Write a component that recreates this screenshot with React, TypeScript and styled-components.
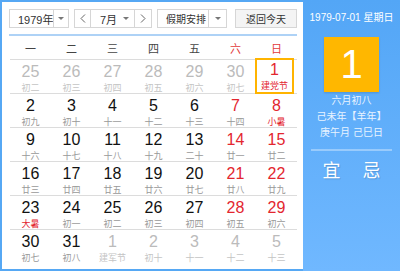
import React from "react";
import styled, { createGlobalStyle } from "styled-components";

const GlobalStyle = createGlobalStyle`
  html, body {
    margin: 0;
    padding: 0;
    background: #fff;
  }
  body {
    font-family: "Liberation Sans", "Noto Sans CJK SC", sans-serif;
  }
`;

type Kind = "other" | "normal" | "weekend";
interface Day {
  d: number;
  lunar: string;
  kind: Kind;
  fest?: boolean;
  selected?: boolean;
}

const weekdays = ["一", "二", "三", "四", "五", "六", "日"];

const o = (d: number, lunar: string): Day => ({ d, lunar, kind: "other" });
const n = (d: number, lunar: string, fest = false): Day => ({ d, lunar, kind: "normal", fest });
const w = (d: number, lunar: string, fest = false): Day => ({ d, lunar, kind: "weekend", fest });

const weeks: Day[][] = [
  [o(25, "初二"), o(26, "初三"), o(27, "初四"), o(28, "初五"), o(29, "初六"), o(30, "初七"),
    { d: 1, lunar: "建党节", kind: "weekend", fest: true, selected: true }],
  [n(2, "初九"), n(3, "初十"), n(4, "十一"), n(5, "十二"), n(6, "十三"), w(7, "十四"), w(8, "小暑", true)],
  [n(9, "十六"), n(10, "十七"), n(11, "十八"), n(12, "十九"), n(13, "二十"), w(14, "廿一"), w(15, "廿二")],
  [n(16, "廿三"), n(17, "廿四"), n(18, "廿五"), n(19, "廿六"), n(20, "廿七"), w(21, "廿八"), w(22, "廿九")],
  [n(23, "大暑", true), n(24, "初一"), n(25, "初二"), n(26, "初三"), n(27, "初四"), w(28, "初五"), w(29, "初六")],
  [n(30, "初七"), n(31, "初八"), o(1, "建军节"), o(2, "初十"), o(3, "十一"), o(4, "十二"), o(5, "十三")],
];

const Widget = styled.div`
  display: flex;
  width: 400px;
  height: 271px;
`;

const LeftPanel = styled.div`
  box-sizing: border-box;
  width: 303px;
  border: 2px solid #56a8f4;
  border-right: none;
  padding: 7px 6px 0 8px;
  background: #fff;
`;

const Toolbar = styled.div`
  display: flex;
  align-items: center;
  height: 19px;
  margin-left: -1px;
`;

const Box = styled.div<{ $w: number; $ml?: number; $grey?: boolean; $fs?: number }>`
  box-sizing: border-box;
  display: flex;
  align-items: stretch;
  width: ${(p) => p.$w}px;
  height: 19px;
  margin-left: ${(p) => p.$ml ?? 0}px;
  border: 1px solid #d6d6d6;
  background: ${(p) => (p.$grey ? "#f4f4f4" : "#fff")};
  font-size: ${(p) => p.$fs ?? 11}px;
  color: #333;
`;

const BoxText = styled.div<{ $center?: boolean; $pl?: number }>`
  flex: 1;
  display: flex;
  align-items: center;
  justify-content: ${(p) => (p.$center ? "center" : "flex-start")};
  padding-left: ${(p) => (p.$center ? 0 : p.$pl ?? 8)}px;
  white-space: nowrap;
`;

const ArrowCell = styled.div<{ $w: number; $line?: boolean }>`
  width: ${(p) => p.$w}px;
  display: flex;
  align-items: center;
  justify-content: center;
  border-left: ${(p) => (p.$line ? "1px solid #d6d6d6" : "none")};
`;

const Caret = styled.span`
  width: 0;
  height: 0;
  border-left: 3px solid transparent;
  border-right: 3px solid transparent;
  border-top: 3px solid #777;
`;

const NavBtn = styled.div<{ $w: number; $side: "l" | "r" }>`
  width: ${(p) => p.$w}px;
  display: flex;
  align-items: center;
  justify-content: center;
  ${(p) => (p.$side === "l" ? "border-right" : "border-left")}: 1px solid #d6d6d6;
`;

const Chevron = ({ dir }: { dir: "l" | "r" }) => (
  <svg width="6" height="9" viewBox="0 0 6 9">
    <polyline
      points={dir === "l" ? "5,0.5 1,4.5 5,8.5" : "1,0.5 5,4.5 1,8.5"}
      fill="none"
      stroke="#666"
      strokeWidth="1"
    />
  </svg>
);

const BlueRule = styled.div`
  height: 2px;
  margin: 6px 0 0 -1px;
  background: #aed2f6;
`;

const Grid = styled.div`
  display: grid;
  grid-template-columns: repeat(7, 41px);
`;

const Head = styled.div<{ $red?: boolean }>`
  height: 23px;
  display: flex;
  align-items: center;
  justify-content: center;
  font-size: 11px;
  color: ${(p) => (p.$red ? "#e23a3a" : "#444")};
  border-bottom: 1px solid #dcdcdc;
`;

const Cell = styled.div<{ $last: boolean }>`
  height: 33px;
  display: flex;
  border-bottom: ${(p) => (p.$last ? "none" : "1px solid #dcdcdc")};
`;

const CellInner = styled.div<{ $sel?: boolean }>`
  box-sizing: border-box;
  flex: 1;
  display: flex;
  flex-direction: column;
  align-items: center;
  padding-top: ${(p) => (p.$sel ? 1 : 3)}px;
  margin: ${(p) => (p.$sel ? "-2px 3px -1px -1px" : "0")};
  border: ${(p) => (p.$sel ? "2px solid #ffb400" : "none")};
`;

const Num = styled.div<{ $kind: Kind }>`
  height: 17px;
  line-height: 17px;
  font-size: 16px;
  color: ${(p) => (p.$kind === "other" ? "#bbb" : p.$kind === "weekend" ? "#e3262f" : "#111")};
`;

const Lunar = styled.div<{ $kind: Kind; $fest?: boolean }>`
  margin-top: 2px;
  line-height: 12px;
  font-size: 9px;
  color: ${(p) => (p.$kind === "other" ? "#c4c4c4" : p.$fest ? "#e3262f" : "#999")};
`;

const RightPanel = styled.div`
  flex: 1;
  display: flex;
  flex-direction: column;
  align-items: center;
  background: linear-gradient(#53a6f6, #70b8ff);
  color: #fff;
`;

const DateLine = styled.div`
  margin-top: 12px;
  font-size: 10px;
  line-height: 12px;
  white-space: nowrap;
`;

const DayCard = styled.div`
  width: 55px;
  height: 55px;
  margin-top: 13px;
  background: #ffb700;
  box-shadow: 0 1px 2px rgba(0, 0, 0, 0.15);
  display: flex;
  align-items: center;
  justify-content: center;
  font-size: 40px;
  color: #fff;
`;

const LunarInfo = styled.div`
  margin-top: 1px;
  font-size: 10px;
  line-height: 16px;
  text-align: center;
  white-space: nowrap;
  color: #e8f3ff;
`;

const PanelRule = styled.div`
  width: 81px;
  height: 2px;
  margin-top: 8px;
  background: rgba(255, 255, 255, 0.35);
`;

const Advice = styled.div`
  display: flex;
  gap: 22px;
  margin-top: 10px;
  font-size: 18px;
  line-height: 20px;
  text-shadow: 1px 1px 1px rgba(0, 0, 0, 0.15);
`;

export default function App() {
  return (
    <>
      <GlobalStyle />
      <Widget>
        <LeftPanel>
          <Toolbar>
            <Box $w={60}>
              <BoxText $pl={8}>1979年</BoxText>
              <ArrowCell $w={19} $line>
                <Caret />
              </ArrowCell>
            </Box>
            <Box $w={78} $ml={5}>
              <NavBtn $w={15} $side="l">
                <Chevron dir="l" />
              </NavBtn>
              <BoxText $pl={9}>7月</BoxText>
              <ArrowCell $w={16}>
                <Caret />
              </ArrowCell>
              <NavBtn $w={16} $side="r">
                <Chevron dir="r" />
              </NavBtn>
            </Box>
            <Box $w={70} $ml={5} $fs={10}>
              <BoxText $pl={8}>假期安排</BoxText>
              <ArrowCell $w={17} $line>
                <Caret />
              </ArrowCell>
            </Box>
            <Box $w={62} $ml={8} $fs={10} $grey>
              <BoxText $center>返回今天</BoxText>
            </Box>
          </Toolbar>
          <BlueRule />
          <Grid>
            {weekdays.map((wd, i) => (
              <Head key={wd} $red={i >= 5}>
                {wd}
              </Head>
            ))}
            {weeks.map((week, wi) =>
              week.map((day, di) => (
                <Cell key={`${wi}-${di}`} $last={wi === weeks.length - 1}>
                  <CellInner $sel={day.selected}>
                    <Num $kind={day.kind}>{day.d}</Num>
                    <Lunar $kind={day.kind} $fest={day.fest}>
                      {day.lunar}
                    </Lunar>
                  </CellInner>
                </Cell>
              ))
            )}
          </Grid>
        </LeftPanel>
        <RightPanel>
          <DateLine>1979-07-01 星期日</DateLine>
          <DayCard>1</DayCard>
          <LunarInfo>
            六月初八
            <br />
            己未年【羊年】
            <br />
            庚午月 己巳日
          </LunarInfo>
          <PanelRule />
          <Advice>
            <span>宜</span>
            <span>忌</span>
          </Advice>
        </RightPanel>
      </Widget>
    </>
  );
}
